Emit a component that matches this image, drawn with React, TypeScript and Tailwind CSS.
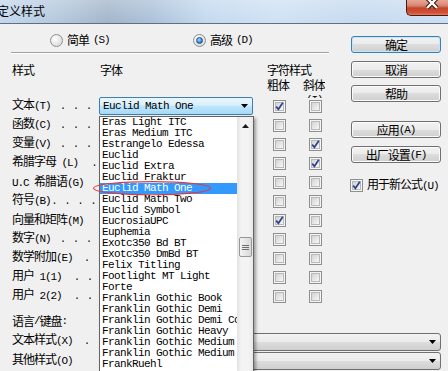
import type { ReactNode } from 'react'

const cjk = "font-['Noto_Sans_CJK_SC',sans-serif] text-[12px] tracking-[-1px] leading-[14px]"
const mono = "font-['Liberation_Mono',monospace] text-[11px] tracking-[-1.1px]"
const listFont = "font-['Liberation_Mono',monospace] text-[11px] tracking-[-0.6px]"

// splits a label into CJK runs and ASCII runs (ASCII drawn narrower, like SimSun)
function Txt({ s }: { s: string }) {
  return (
    <>
      {s
        .split(/([ -~]+)/)
        .filter(Boolean)
        .map((p, i) =>
          /^[ -~]+$/.test(p) ? (
            <span key={i} className={mono}>
              {p}
            </span>
          ) : (
            <span key={i}>{p}</span>
          )
        )}
    </>
  )
}

function Dots({ s, className }: { s: string; className: string }) {
  return (
    <span className={`font-['Liberation_Mono',monospace] text-[10px] tracking-[0.5px] ${className}`}>{s}</span>
  )
}

function Check({ on }: { on?: boolean }) {
  return (
    <span className="relative block w-[13px] h-[13px] border border-[#8e8f8f] bg-[#f4f4f4] p-px">
      <span className="block w-full h-full border border-[#b9b9b9] bg-[linear-gradient(135deg,#d3d3d3,#f7f7f7)]" />
      {on && (
        <svg className="absolute left-0 top-0" width="11" height="11" viewBox="0 0 11 11">
          <path d="M2.2 5.6 L4.4 8.3 L8.8 1.8" fill="none" stroke="#2d428c" strokeWidth="1.7" />
        </svg>
      )}
    </span>
  )
}

function Radio({ on }: { on?: boolean }) {
  return (
    <span className="flex items-center justify-center w-[13px] h-[13px] rounded-full border border-[#8e8f8f] bg-[radial-gradient(circle_at_35%_35%,#ffffff,#e4e4e4_60%,#cfcfcf)]">
      {on && (
        <span className="w-[7px] h-[7px] rounded-full border border-[#25548f] bg-[radial-gradient(circle_at_40%_35%,#aee0fb,#3a8ee0_55%,#11509c)]" />
      )}
    </span>
  )
}

function Btn({ children, def, className = '' }: { children: ReactNode; def?: boolean; className?: string }) {
  return (
    <div
      className={`h-[17px] w-[90px] rounded-[3px] border flex items-center justify-center bg-[linear-gradient(180deg,#f2f2f2,#ebebeb_50%,#dddddd_50%,#cfcfcf)] ${
        def ? 'border-[#3c7fb1] shadow-[inset_0_0_0_1px_#c4e6f9]' : 'border-[#707070] shadow-[inset_0_0_0_1px_#fbfbfb]'
      } ${className}`}
    >
      <Txt s={String(children)} />
    </div>
  )
}

function Arrow() {
  return (
    <svg width="7" height="4" viewBox="0 0 7 4">
      <path d="M0 0h7L3.5 4z" fill="#000" />
    </svg>
  )
}

const fonts = [
  'Eras Light ITC',
  'Eras Medium ITC',
  'Estrangelo Edessa',
  'Euclid',
  'Euclid Extra',
  'Euclid Fraktur',
  'Euclid Math One',
  'Euclid Math Two',
  'Euclid Symbol',
  'EucrosiaUPC',
  'Euphemia',
  'Exotc350 Bd BT',
  'Exotc350 DmBd BT',
  'Felix Titling',
  'Footlight MT Light',
  'Forte',
  'Franklin Gothic Book',
  'Franklin Gothic Demi',
  'Franklin Gothic Demi Cond',
  'Franklin Gothic Heavy',
  'Franklin Gothic Medium',
  'Franklin Gothic Medium Cond',
  'FrankRuehl',
]

const rows = [
  { label: '文本(T)', dots: ' . . . .', dm: 'ml-[3px]', b: true, i: false },
  { label: '函数(C)', dots: ' . . . .', dm: 'ml-[3px]', b: false, i: false },
  { label: '变量(V)', dots: ' . . . .', dm: 'ml-[3px]', b: false, i: true },
  { label: '希腊字母 (L)', dots: ' .', dm: 'ml-[7px]', b: false, i: true },
  { label: 'U.C 希腊语(G)', dots: '', dm: '', b: false, i: false },
  { label: '符号(B)', dots: '. . . .', dm: 'ml-[1px]', b: false, i: false },
  { label: '向量和矩阵(M)', dots: '', dm: '', b: true, i: false },
  { label: '数字(N)', dots: ' . . . .', dm: 'ml-[3px]', b: false, i: false },
  { label: '数学附加(E)', dots: ' .', dm: 'ml-[5px]', b: false, i: false },
  { label: '用户 1(1)', dots: ' . . .', dm: 'ml-[6px]', b: false, i: false },
  { label: '用户 2(2)', dots: ' . . .', dm: 'ml-[6px]', b: false, i: false },
]

function FontList() {
  return (
    <div className="absolute left-0 top-[19px] z-10 flex w-[155px] h-[260px] border border-[#646464] bg-white shadow-[2px_2px_3px_rgba(0,0,0,0.35)]">
      <div className={`w-[137px] overflow-hidden ${listFont}`}>
        {fonts.map((f, i) => (
          <div
            key={f}
            className={`h-[11px] leading-[11px] pl-[2px] whitespace-pre ${
              i === 6 ? 'bg-[#3399ff] text-white' : 'text-black'
            }`}
          >
            {f}
          </div>
        ))}
      </div>
      {/* scrollbar */}
      <div className="w-[16px] flex flex-col bg-[linear-gradient(90deg,#e2e2e2,#f3f3f3_25%,#f3f3f3_75%,#e8e8e8)]">
        <div className="h-[17px] flex items-center justify-center">
          <svg width="7" height="4" viewBox="0 0 7 4">
            <path d="M0 4h7L3.5 0z" fill="#1a1a1a" />
          </svg>
        </div>
        <div className="h-[103px]" />
        <div className="ml-[2px] w-[13px] h-[20px] rounded-[2px] border border-[#979797] bg-[linear-gradient(90deg,#f4f4f4,#e6e6e6_50%,#d8d8d8)] flex flex-col items-center justify-center gap-px">
          <span className="block w-[7px] h-px bg-[#6f6f6f]" />
          <span className="block w-[7px] h-px bg-[#6f6f6f]" />
          <span className="block w-[7px] h-px bg-[#6f6f6f]" />
        </div>
      </div>
    </div>
  )
}

function Select() {
  return (
    <div className="w-[341px] h-[18px] rounded-[3px] border border-[#707070] bg-[linear-gradient(180deg,#f2f2f2,#ebebeb_50%,#dddddd_50%,#cfcfcf)] flex items-center justify-end pr-[4px]">
      <Arrow />
    </div>
  )
}

export default function App() {
  return (
    <div className={`relative w-[448px] h-[371px] overflow-hidden bg-[#f0f0f0] text-black ${cjk}`}>
      {/* title bar */}
      <div className="relative h-[24px] border-b border-[#5d7086] bg-[linear-gradient(180deg,rgba(255,255,255,0.25),rgba(255,255,255,0)),linear-gradient(90deg,#c3d8ee_0%,#b3c6db_14%,#a2b5ca_24%,#acc1d8_34%,#c4d9ef_46%,#cfe1f3_62%,#c6daef_80%,#cbdef2_100%)]">
        <div className="-ml-[3px] pt-[4px] text-[12px] tracking-normal">定义样式</div>
        <div className="absolute right-0 top-0 w-[42px] h-[16px] rounded-bl-[5px] border-l border-b border-[#4a1a12] bg-[linear-gradient(180deg,#e7a596_0%,#d98a78_35%,#c4452c_55%,#cf5237_85%,#de7d64_100%)]">
          <svg className="absolute left-[18px] top-0" width="14" height="10" viewBox="0 0 14 10">
            <path d="M2 -2 L12 8 M12 -2 L2 8" stroke="#3b1410" strokeWidth="4.4" />
            <path d="M2 -2 L12 8 M12 -2 L2 8" stroke="#ffffff" strokeWidth="2.4" />
          </svg>
        </div>
      </div>

      <div className="flex">
        {/* left part */}
        <div className="w-[340px]">
          <div className="mt-[8px] h-[16px] flex items-center">
            <div className="ml-[50px] w-[143px] flex items-center gap-[4px]">
              <Radio />
              <Txt s="简单(S)" />
            </div>
            <div className="flex items-center gap-[4px]">
              <Radio on />
              <Txt s="高级(D)" />
            </div>
          </div>
          <div className="mt-[4px] ml-[11px] w-[318px] h-[2px] border-t border-[#a0a0a0] border-b border-b-white" />

          <div className="mt-[9px] h-[14px] flex">
            <div className="w-[100px] pl-[12px]">样式</div>
            <div className="w-[167px]">字体</div>
            <div>字符样式</div>
          </div>
          <div className="mt-px h-[18px] flex items-start">
            <div className="ml-[267px] w-[36px] leading-[13px]">粗体</div>
            <div className="h-[20px] overflow-hidden flex flex-col leading-[13px]">
              <span>斜体</span>
              <span className="pl-[3px]">
                <Txt s="(I)" />
              </span>
            </div>
          </div>

          {rows.map((r, idx) => (
            <div key={r.label} className={`flex items-center ${idx === 0 ? 'h-[20px]' : 'h-[19px]'}`}>
              <div className="w-[99px] pl-[12px] pb-[2px] whitespace-pre">
                <Txt s={r.label} />
                {r.dots && <Dots s={r.dots} className={r.dm} />}
              </div>
              <div className="w-[168px]">
                {idx === 0 && (
                  <div className="relative">
                    <div className={`w-[154px] h-[18px] rounded-[2px] border border-[#3c7fb1] bg-[linear-gradient(180deg,#eaf6fd,#d9f0fc_45%,#bee6fd_50%,#a7d9f5)] flex items-center justify-between pl-[3px] pr-[4px] ${listFont}`}>
                      <span>Euclid Math One</span>
                      <Arrow />
                    </div>
                    <FontList />
                  </div>
                )}
              </div>
              <div className="w-[24px] flex justify-center">
                <Check on={r.b} />
              </div>
              <div className="w-[12px]" />
              <div className="w-[24px] flex justify-center">
                <Check on={r.i} />
              </div>
            </div>
          ))}
        </div>

        {/* right column */}
        <div className="ml-[11px] w-[90px] pt-[12px] flex flex-col">
          <Btn def>确定</Btn>
          <Btn className="mt-[8px]">取消</Btn>
          <Btn className="mt-[7px]">帮助</Btn>
          <Btn className="mt-[19px]">应用(A)</Btn>
          <Btn className="mt-[8px]">出厂设置(F)</Btn>
          <div className="mt-[14px] flex items-center gap-[4px] -ml-px">
            <Check on />
            <span className="whitespace-pre">
              <Txt s="用于新公式(U)" />
            </span>
          </div>
        </div>
      </div>

      {/* language / keyboard */}
      <div className="mt-[6px] h-[19px] flex items-center pl-[12px] pb-[2px]">
        <Txt s="语言/键盘:" />
      </div>
      <div className="mt-px h-[19px] flex items-center">
        <div className="w-[100px] pl-[12px] pb-[2px] whitespace-pre">
          <Txt s="文本样式(X)" />
          <Dots s=" ." className="ml-[5px]" />
        </div>
        <Select />
      </div>
      <div className="h-[19px] flex items-center">
        <div className="w-[100px] pl-[12px] pb-[2px] whitespace-pre">
          <Txt s="其他样式(O)" />
        </div>
        <Select />
      </div>

      {/* red annotation ring */}
      <svg className="absolute left-[92px] top-[180px] z-20" width="120" height="17" viewBox="0 0 120 17">
        <ellipse cx="60" cy="8.2" rx="58.4" ry="6.6" fill="none" stroke="#e3393b" strokeWidth="1.1" />
      </svg>
    </div>
  )
}
